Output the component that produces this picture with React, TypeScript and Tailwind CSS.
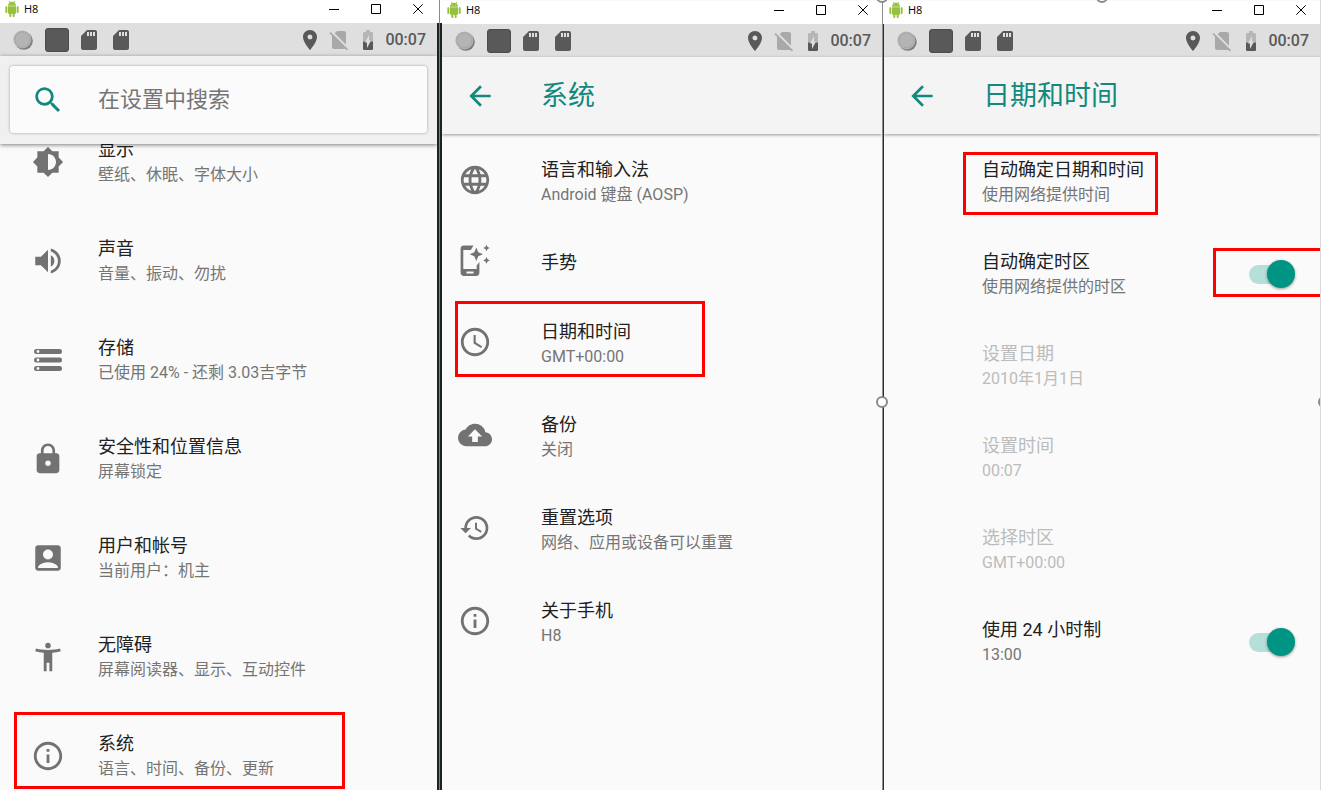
import type { ReactNode } from 'react'
import {
  MdAccessTime,
  MdAccessibilityNew,
  MdAccountBox,
  MdArrowBack,
  MdBackup,
  MdBatteryCharging50,
  MdBrightnessMedium,
  MdHistory,
  MdInfoOutline,
  MdLanguage,
  MdLock,
  MdPlace,
  MdSdCard,
  MdSearch,
  MdSignalCellularNoSim,
  MdVolumeUp,
} from 'react-icons/md'

interface Item {
  title: string
  summary?: string
  icon?: ReactNode
  disabled?: boolean
  toggle?: boolean
  mark?: string
}

const mainItems: Item[] = [
  {
    title: '显示',
    summary: '壁纸、休眠、字体大小',
    icon: <MdBrightnessMedium size={32} />,
  },
  {
    title: '声音',
    summary: '音量、振动、勿扰',
    icon: <MdVolumeUp size={34} />,
  },
  {
    title: '存储',
    summary: '已使用 24% - 还剩 3.03吉字节',
    icon: <StorageIcon />,
  },
  {
    title: '安全性和位置信息',
    summary: '屏幕锁定',
    icon: <MdLock size={34} />,
  },
  {
    title: '用户和帐号',
    summary: '当前用户：机主',
    icon: <MdAccountBox size={34} />,
  },
  {
    title: '无障碍',
    summary: '屏幕阅读器、显示、互动控件',
    icon: <MdAccessibilityNew size={34} />,
  },
  {
    title: '系统',
    summary: '语言、时间、备份、更新',
    icon: <MdInfoOutline size={34} />,
    mark: 'left-[14px] top-[6px] h-[77px] w-[331px]',
  },
]

const systemItems: Item[] = [
  {
    title: '语言和输入法',
    summary: 'Android 键盘 (AOSP)',
    icon: <MdLanguage size={34} />,
  },
  { title: '手势', icon: <GestureIcon /> },
  {
    title: '日期和时间',
    summary: 'GMT+00:00',
    icon: <MdAccessTime size={34} />,
    mark: 'left-[13px] top-[4px] h-[76px] w-[250px]',
  },
  { title: '备份', summary: '关闭', icon: <MdBackup size={34} /> },
  {
    title: '重置选项',
    summary: '网络、应用或设备可以重置',
    icon: <MdHistory size={32} />,
  },
  { title: '关于手机', summary: 'H8', icon: <MdInfoOutline size={34} /> },
]

const dateItems: Item[] = [
  {
    title: '自动确定日期和时间',
    summary: '使用网络提供时间',
    mark: 'left-[79px] top-[16px] h-[63px] w-[195px]',
  },
  {
    title: '自动确定时区',
    summary: '使用网络提供的时区',
    toggle: true,
    mark: 'right-0 top-[20px] h-[49px] w-[107px] border-r-0',
  },
  { title: '设置日期', summary: '2010年1月1日', disabled: true },
  { title: '设置时间', summary: '00:07', disabled: true },
  { title: '选择时区', summary: 'GMT+00:00', disabled: true },
  { title: '使用 24 小时制', summary: '13:00', toggle: true },
]

function StorageIcon() {
  return (
    <svg width="28" height="22" viewBox="0 0 28 22">
      {[2.5, 11, 19.5].map((y) => (
        <g key={y}>
          <rect
            x="0"
            y={y - 2.5}
            width="28"
            height="5"
            rx="2.5"
            fill="#727272"
          />
          <circle cx="4" cy={y} r="1.4" fill="#fafafa" />
        </g>
      ))}
    </svg>
  )
}

function GestureIcon() {
  return (
    <svg width="32" height="32" viewBox="0 0 32 32" fill="currentColor">
      <path d="M14.5 .5H5a3.4 3.4 0 0 0-3.4 3.4v23.7A3.4 3.4 0 0 0 5 31h12a3.4 3.4 0 0 0 3.4-3.4V17l-2.7 3.5V24H4.3V5h7.5zM7.5 26.4h7v2h-7z" />
      <path d="M17.3 2.5l2 4.7 4.7 2-4.7 2-2 4.7-2-4.7-4.7-2 4.7-2z" />
      <path d="M27.5-.3l1.1 2.2 2.2 1.1-2.2 1.1-1.1 2.2-1.1-2.2L24.200 3l2.2-1.100zM27.5 12.100l1.1 2.200 2.2 1.100-2.2 1.100-1.1 2.200-1.1-2.200-2.2-1.100 2.2-1.100z" />
    </svg>
  )
}

function AndroidIcon() {
  return (
    <svg width="16" height="16" viewBox="0 0 24 24" fill="#97c03d">
      <path d="M6 18c0 .55.45 1 1 1h1v3.5c0 .83.67 1.5 1.5 1.5s1.5-.67 1.5-1.5V19h2v3.5c0 .83.67 1.5 1.5 1.5s1.5-.67 1.5-1.5V19h1c.55 0 1-.45 1-1V8H6v10zM3.5 8C2.67 8 2 8.67 2 9.5v7c0 .83.67 1.5 1.5 1.5S5 17.33 5 16.5v-7C5 8.67 4.33 8 3.5 8zm17 0c-.83 0-1.5.67-1.5 1.5v7c0 .83.67 1.5 1.5 1.5s1.5-.67 1.5-1.5v-7c0-.83-.67-1.5-1.5-1.5zm-4.97-5.84l1.3-1.3c.2-.2.2-.51 0-.71-.2-.2-.51-.2-.71 0l-1.48 1.48C13.85 1.23 12.95 1 12 1c-.96 0-1.86.23-2.66.63L7.85.15c-.2-.2-.51-.2-.71 0-.2.2-.2.51 0 .71l1.31 1.31C6.97 3.26 6 5.01 6 7h12c0-1.99-.97-3.75-2.47-4.84zM10 5H9V4h1v1zm5 0h-1V4h1v1z" />
    </svg>
  )
}

function CoinIcon() {
  return (
    <svg width="20" height="20" viewBox="0 0 20 20" className="mr-1">
      <circle cx="10.8" cy="10.8" r="9" fill="#7d7d7d" />
      <circle cx="9.4" cy="9.4" r="9" fill="#b4b4b4" />
      <circle
        cx="9.4"
        cy="9.4"
        r="7.4"
        fill="none"
        stroke="#9c9c9c"
        strokeDasharray="1.5 1"
      />
    </svg>
  )
}

function TitleBar() {
  return (
    <div className="flex h-full items-start justify-between bg-white pl-1">
      <div className="flex items-center gap-1 font-['Open_Sans',sans-serif] text-[11px] leading-[17px] text-black">
        <AndroidIcon />
        <span>H8</span>
      </div>
      <div className="-mr-0.5 flex text-black">
        <button
          aria-label="最小化"
          className="flex h-[17px] w-[42px] items-center justify-center"
        >
          <svg width="10" height="10" viewBox="0 0 10 10" stroke="currentColor">
            <path d="M0 5.5h10" />
          </svg>
        </button>
        <button
          aria-label="最大化"
          className="flex h-[17px] w-[42px] items-center justify-center"
        >
          <svg
            width="10"
            height="10"
            viewBox="0 0 10 10"
            fill="none"
            stroke="currentColor"
          >
            <path d="M.5.5h9v9h-9z" />
          </svg>
        </button>
        <button
          aria-label="关闭"
          className="flex h-[17px] w-[42px] items-center justify-center"
        >
          <svg width="10" height="10" viewBox="0 0 10 10" stroke="currentColor">
            <path d="M.3.3l9.4 9.4M9.7.3L.3 9.7" />
          </svg>
        </button>
      </div>
    </div>
  )
}

function StatusBar() {
  return (
    <div className="flex h-[33px] shrink-0 items-center justify-between bg-[#dfdfdf] pr-[11px] pl-[13px] text-[#595959]">
      <div className="flex items-center gap-2">
        <CoinIcon />
        <div className="size-6 rounded-[3px] border border-[#4c4c4c] bg-[#595959]" />
        <MdSdCard size={24} />
        <MdSdCard size={24} />
      </div>
      <div className="flex items-center gap-[5px]">
        <MdPlace size={24} />
        <MdSignalCellularNoSim size={24} className="text-[#a9a9a9]" />
        <MdBatteryCharging50 size={24} />
        <span className="text-[16px] font-medium">00:07</span>
      </div>
    </div>
  )
}

function AppBar({ title }: { title: string }) {
  return (
    <header className="z-10 flex h-[77px] shrink-0 items-center bg-[#f4f4f4] pl-[22px] text-[#12897c] shadow-[0_1px_3px_rgba(0,0,0,0.4)]">
      <button aria-label="返回">
        <MdArrowBack size={32} />
      </button>
      <h1 className="ml-[45px] text-[27px] leading-[36px]">{title}</h1>
    </header>
  )
}

function SearchBar() {
  return (
    <header className="z-10 shrink-0 bg-[#f0f0f0] px-[10px] pt-[10px] pb-[11px] shadow-[0_1px_4px_rgba(0,0,0,0.5)]">
      <label className="flex h-[67px] items-center rounded-[3px] bg-[#fbfbfb] pl-[21px] shadow-[0_0_3px_rgba(0,0,0,0.35)]">
        <MdSearch size={34} className="shrink-0 text-[#12897c]" />
        <input
          type="text"
          aria-label="在设置中搜索"
          placeholder="在设置中搜索"
          className="ml-[33px] min-w-0 flex-1 bg-transparent text-[22px] leading-[32px] outline-none placeholder:text-[#757575]"
        />
      </label>
    </header>
  )
}

function ItemText({ item }: { item: Item }) {
  return (
    <span
      className={
        item.disabled
          ? 'flex flex-1 flex-col text-left text-[#bcbcbc]'
          : 'flex flex-1 flex-col text-left text-[#212121]'
      }
    >
      <span className="text-[18px] leading-[25px]">{item.title}</span>
      {item.summary && (
        <span
          className={
            item.disabled
              ? 'text-[16px] leading-[25px]'
              : 'text-[16px] leading-[25px] text-[#757575]'
          }
        >
          {item.summary}
        </span>
      )}
    </span>
  )
}

function Mark({ className }: { className: string }) {
  return (
    <span
      className={`pointer-events-none absolute border-3 border-[#fe0000] ${className}`}
    />
  )
}

function ToggleRow({ item }: { item: Item }) {
  return (
    <label className="flex h-full w-full items-center pr-[25px] pl-[98px]">
      <ItemText item={item} />
      <span className="relative flex items-center">
        <input
          type="checkbox"
          role="switch"
          defaultChecked
          className="peer h-[19px] w-[46px] appearance-none rounded-full bg-[#b6dfda]"
        />
        <span className="absolute right-0 size-7 rounded-full bg-[#009485] shadow-[0_1px_3px_rgba(0,0,0,0.4)]" />
      </span>
    </label>
  )
}

interface ListProps {
  items: Item[]
  rowClass: string
  iconClass?: string
}

function SettingsList({ items, rowClass, iconClass }: ListProps) {
  return (
    <ul>
      {items.map((item) => (
        <li
          key={item.title}
          className={item.summary ? `relative ${rowClass}` : 'relative h-[69px]'}
        >
          {item.toggle ? (
            <ToggleRow item={item} />
          ) : (
            <button
              disabled={item.disabled}
              className="flex h-full w-full items-center"
            >
              {iconClass ? (
                <span
                  className={`flex shrink-0 justify-center text-[#727272] ${iconClass}`}
                >
                  {item.icon}
                </span>
              ) : (
                <span className="w-[98px] shrink-0" />
              )}
              <ItemText item={item} />
            </button>
          )}
          {item.mark && <Mark className={item.mark} />}
        </li>
      ))}
    </ul>
  )
}

function Handle({ className }: { className: string }) {
  return (
    <span
      className={`absolute z-20 size-3 rounded-full border-2 border-[#8a8a8a] bg-white ${className}`}
    />
  )
}

function App() {
  return (
    <main className="grid h-screen grid-cols-[437fr_5px_440fr_2px_437fr] overflow-hidden bg-[#fafafa] font-[Roboto,'Noto_Sans_CJK_SC',sans-serif]">
      <section className="flex min-h-0 min-w-0 flex-col overflow-hidden">
        <div className="h-[23px] shrink-0">
          <TitleBar />
        </div>
        <StatusBar />
        <SearchBar />
        {/* list is scrolled a little under the search bar */}
        <div className="-mt-8">
          <SettingsList
            items={mainItems}
            rowClass="h-[99px]"
            iconClass="w-[96px] mr-[2px]"
          />
        </div>
      </section>

      <div className="flex flex-col items-center bg-white">
        <div className="h-[23px] w-px shrink-0 bg-[#8a8a8a]" />
        <div className="w-full flex-1 border-x-2 border-[#1c2324] bg-[#7b8283]" />
      </div>

      <section className="flex min-h-0 min-w-0 flex-col overflow-hidden">
        <div className="h-6 shrink-0 pt-px">
          <TitleBar />
        </div>
        <StatusBar />
        <AppBar title="系统" />
        <div className="pt-px">
          <SettingsList
            items={systemItems}
            rowClass="h-[93px]"
            iconClass="w-[66px] mr-[33px] pb-[3px]"
          />
        </div>
      </section>

      <div className="relative flex flex-col bg-[#8f8f8f]">
        <div className="h-6 shrink-0 border-r border-white" />
        <div className="flex-1 border-r border-[#2d2d2d]" />
        <Handle className="-top-[9px] -left-[6px]" />
        <Handle className="top-[396px] -left-[6px]" />
      </div>

      <section className="relative flex min-h-0 min-w-0 flex-col overflow-hidden border-r border-[#d9d9d9]">
        <div className="h-6 shrink-0 pt-px">
          <TitleBar />
        </div>
        <StatusBar />
        <AppBar title="日期和时间" />
        <div className="pt-[2px]">
          <SettingsList items={dateItems} rowClass="h-[92px]" />
        </div>
        <Handle className="-top-[9px] left-1/2 -translate-x-1/2" />
        <Handle className="top-[396px] -right-[10px]" />
      </section>
    </main>
  )
}

export default App
